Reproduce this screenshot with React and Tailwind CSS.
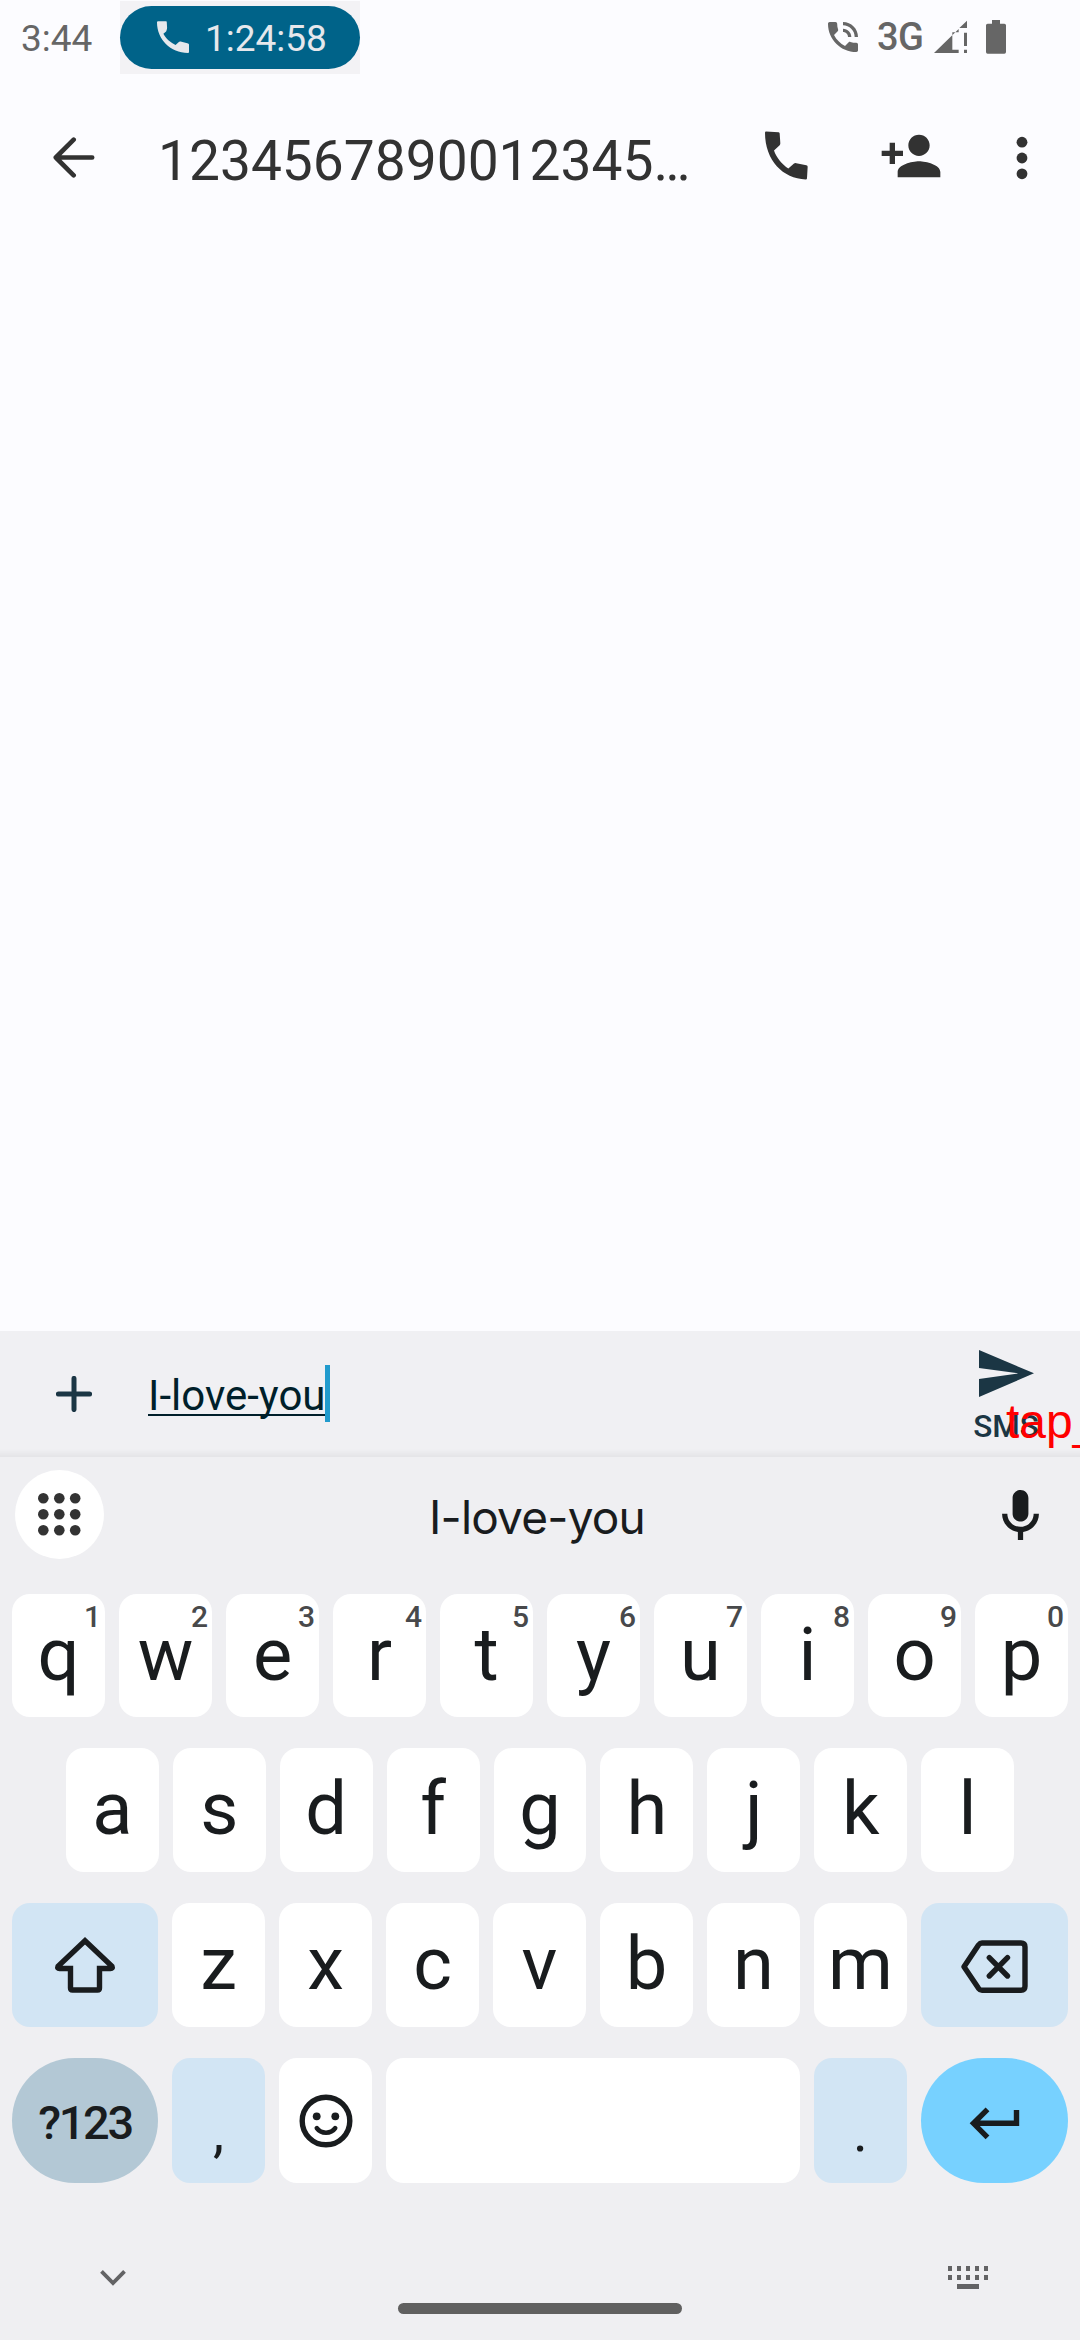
const ink = '#191c1e';

function Svg({ box, w, h, className = '', children }) {
  return (
    <svg viewBox={box} width={w} height={h} className={`block shrink-0 ${className}`} fill="none">
      {children}
    </svg>
  );
}

function StatusBar() {
  return (
    <div className="flex h-[74px] shrink-0 items-start text-[37px] leading-[44px]">
      <div className="w-[120px] pl-[21px] pt-[17px] text-[#666666]">3:44</div>
      <div className="mt-px flex h-[73px] w-[240px] items-center bg-[#f3f2f5]">
        <div className="flex h-[63px] w-full items-center rounded-full bg-[#006389] pl-[37px] text-[#e6e8ec]">
          <Svg box="472 63 95 95" w={32} h={32} className="-mt-px">
            <path fill="currentColor" d="M475 64H499Q501 64 501 66L502 84Q501 91 499 94L491 101C498 115 514 129 527 134L537 125Q539 123 542 124L562 129Q567 130 567 133V155Q567 158 564 158C512 158 472 118 472 67Q472 64 475 64Z" />
          </Svg>
          <span className="pl-[16px] pt-[3px]">1:24:58</span>
        </div>
      </div>
      <div className="ml-auto flex h-[74px] items-center pr-[74px] text-[#666666]">
        <Svg box="0 0 24 24" w={40} h={40}>
          <path fill="currentColor" d="M20 15.5c-1.25 0-2.45-.2-3.57-.57-.1-.03-.21-.05-.31-.05-.26 0-.51.1-.71.29l-2.2 2.2c-2.83-1.44-5.15-3.75-6.59-6.59l2.2-2.21c.28-.26.36-.65.25-1C8.7 6.45 8.5 5.25 8.5 4c0-.55-.45-1-1-1H4c-.55 0-1 .45-1 1 0 9.39 7.61 17 17 17 .55 0 1-.45 1-1v-3.5c0-.55-.45-1-1-1zM19 12h2c0-4.97-4.03-9-9-9v2c3.87 0 7 3.13 7 7zm-4 0h2c0-2.76-2.24-5-5-5v2c1.66 0 3 1.34 3 3z" />
        </Svg>
        <span className="ml-[14px] w-[56px] text-[38px] font-medium tracking-[-0.5px]">3G</span>
        <Svg box="642 60 99 102" w={33} h={34} className="ml-[1px]">
          <path fill="currentColor" d="M642 159L716 87V97H697V149H716V159ZM741 62V84H718ZM732 98H741V138H732ZM732 149H741V159H732Z" />
        </Svg>
        <Svg box="798 60 60 102" w={20} h={34} className="ml-[19px]">
          <path fill="currentColor" d="M816 60H840V71H853Q858 71 858 76V156Q858 161 853 161H803Q798 161 798 156V76Q798 71 803 71H816Z" />
        </Svg>
      </div>
    </div>
  );
}

function AppBar() {
  return (
    <header className="flex h-[167px] shrink-0 items-center text-[#323232]">
      <Svg box="160 410 126 124" w={42} h={41} className="ml-[53px]">
        <path d="M222 418L168 472L222 526M168 472H278" stroke="currentColor" strokeWidth="14" strokeLinecap="round" strokeLinejoin="round" />
      </Svg>
      <h1 className="ml-[63px] w-[560px] whitespace-nowrap pt-[7px] text-[55.1px] leading-[64px]">1234567890012345…</h1>
      <Svg box="136 392 129 146" w={43} h={49} className="ml-[47px] -mt-[5px]">
        <path fill="currentColor" d="M139 393L177 395Q180 396 180 399L182 428Q182 431 180 434L163 450C170 472 188 492 206 504L223 489Q226 487 230 488L260 494Q264 495 264 499L262 533Q262 537 258 537C190 535 136 480 136 397Q136 393 139 393Z" />
      </Svg>
      <Svg box="0 0 24 24" w={64} h={64} className="ml-[71px] -mt-[3px]">
        <path fill="currentColor" d="M15 12c2.21 0 4-1.79 4-4s-1.79-4-4-4-4 1.79-4 4 1.79 4 4 4zm-9-2V7H4v3H1v2h3v3h2v-3h3v-2H6zm9 4c-2.67 0-8 1.34-8 4v2h16v-2c0-2.66-5.33-4-8-4z" />
      </Svg>
      <Svg box="0 0 12 44" w={12} h={44} className="ml-[73px]">
        <g fill="currentColor">
          <circle cx="6" cy="6.2" r="5.4" />
          <circle cx="6" cy="22" r="5.4" />
          <circle cx="6" cy="37.8" r="5.4" />
        </g>
      </Svg>
    </header>
  );
}

function Composer() {
  return (
    <div className="relative flex h-[126px] shrink-0 items-center overflow-hidden bg-[#f0f0f3] text-[#1b3644]">
      <Svg box="0 0 36 36" w={36} h={36} className="ml-[56px]">
        <path d="M18 2.4V33.6M2.4 18H33.6" stroke="currentColor" strokeWidth="5" strokeLinecap="round" />
      </Svg>
      <div className="-mt-[2px] ml-[56px] flex items-center">
        <span className="border-b-[2px] border-[#001f2a] text-[42px] leading-[36px] text-[#001f2a] pt-[7px]">I-love-you</span>
        <span className="-ml-px h-[57px] w-[5px] bg-[#219bcd]" />
      </div>
      <div className="ml-auto mr-[40px] flex h-full w-[68px] flex-col items-center">
        <Svg box="237 120 165 141" w={55} h={47} className="mt-[19px]">
          <path fill="currentColor" d="M237 120L402 190L237 261V207L355 190L237 174Z" />
        </Svg>
        <span className="pt-[12px] text-[31.5px] font-medium leading-[36px]">SMS</span>
      </div>
      <span className="absolute left-[1006px] top-[64px] font-['Liberation_Sans',Arial,sans-serif] text-[48px] leading-[54px] text-[#ff0000]">tap_</span>
      <div className="absolute inset-x-0 bottom-0 h-[8px] bg-gradient-to-b from-transparent to-black/5" />
    </div>
  );
}

function SuggestionStrip() {
  return (
    <div className="flex h-[115px] shrink-0 items-center pl-[15px] pr-[42px]">
      <div className="flex size-[89px] items-center justify-center rounded-full bg-white">
        <Svg box="0 0 42.6 42.6" w={42.6} h={42.6}>
          <g fill="#333333">
            {[5.3, 21.3, 37.2].map((y) => [5.3, 21.3, 37.2].map((x) => <circle key={`${x}-${y}`} cx={x} cy={y} r="5.3" />))}
          </g>
        </Svg>
      </div>
      <span className="ml-[283px] w-[300px] pt-[4px] text-center font-[Inter,sans-serif] text-[46px] leading-[56px] tracking-[-0.8px] text-[#191c1e]">I-love-you</span>
      <Svg box="5 2 14 19" w={37} h={50} className="ml-auto -mr-px">
        <path fill={ink} d="M12 14c1.66 0 3-1.34 3-3V5c0-1.66-1.34-3-3-3S9 3.34 9 5v6c0 1.66 1.34 3 3 3zM17 11c0 2.76-2.24 5-5 5s-5-2.24-5-5H5c0 3.53 2.61 6.43 6 6.92V21h2v-3.08c3.39-.49 6-3.39 6-6.92h-2z" />
      </Svg>
    </div>
  );
}

function Key({ label, hint }) {
  return (
    <div className="relative flex flex-1 items-center justify-center rounded-[18px] bg-white pb-[2px] text-[74px] leading-[80px]">
      {label}
      {hint && <span className="absolute right-[4px] top-[5px] text-[30px] font-medium leading-[36px] text-[#48494b]">{hint}</span>}
    </div>
  );
}

function Keyboard() {
  const top = 'qwertyuiop'.split('');
  return (
    <div className="mt-[22px] flex shrink-0 flex-col gap-[31px] px-[12px] text-[#191c1e]">
      <div className="flex h-[123px] gap-[14px]">
        {top.map((k, i) => <Key key={k} label={k} hint={String((i + 1) % 10)} />)}
      </div>
      <div className="flex h-[124px] gap-[14px] px-[54px]">
        {'asdfghjkl'.split('').map((k) => <Key key={k} label={k} />)}
      </div>
      <div className="flex h-[124px] gap-[14px]">
        <div className="flex w-[146px] items-center justify-center rounded-[18px] bg-[#d2e5f4]">
          <Svg box="54 1935 62 60" w={62} h={60}>
            <path stroke={ink} strokeWidth="5.4" d="M85 1940.7L112 1966.3Q113 1968.5 110.5 1968.5H99.5V1988Q99.5 1990 97.5 1990H72.5Q70.5 1990 70.5 1988V1968.5H59.5Q57 1968.5 58 1966.3Z" />
          </Svg>
        </div>
        {'zxcvbnm'.split('').map((k) => <Key key={k} label={k} />)}
        <div className="flex w-[147px] items-center justify-center rounded-[18px] bg-[#d2e5f4]">
          <Svg box="959 1938 70 60" w={70} h={60} className="mt-[4px]">
            <path stroke={ink} strokeWidth="5.4" strokeLinejoin="round" d="M963 1967.7L977.5 1946Q979 1944 981 1944H1020Q1024 1944 1024 1948V1987.3Q1024 1991.3 1020 1991.3H981Q979 1991.3 977.5 1989.3Z" />
            <path stroke={ink} strokeWidth="5.4" strokeLinecap="round" d="M988.3 1958.7L1006.5 1977M1006.5 1958.7L988.3 1977" />
          </Svg>
        </div>
      </div>
      <div className="flex h-[125px] gap-[14px]">
        <div className="flex w-[146px] items-center justify-center rounded-full bg-[#b3c8d5] pt-[6px] text-[47px] font-medium tracking-[-2.4px]">?123</div>
        <div className="flex w-[93px] items-center justify-center rounded-[18px] bg-[#d2e5f4] pt-[22px] text-[56px] leading-[64px]">,</div>
        <div className="flex w-[93px] items-center justify-center rounded-[18px] bg-white">
          <Svg box="0 0 54 54" w={54} h={54}>
            <circle cx="27" cy="27" r="23.8" stroke={ink} strokeWidth="5.4" />
            <circle cx="17.7" cy="22.3" r="3.9" fill={ink} />
            <circle cx="36.3" cy="22.3" r="3.9" fill={ink} />
            <path d="M17.8 34.2Q21 38.7 27 38.7T36.2 34.2" stroke={ink} strokeWidth="4.6" strokeLinecap="round" />
          </Svg>
        </div>
        <div className="flex-1 rounded-[18px] bg-white" />
        <div className="flex w-[93px] items-center justify-center rounded-[18px] bg-[#d2e5f4] pt-[22px] text-[56px] leading-[64px]">.</div>
        <div className="flex w-[147px] items-center justify-center rounded-full bg-[#77d1ff]">
          <Svg box="968 2107 52 33" w={52} h={33} className="mt-[6px]">
            <path stroke={ink} strokeWidth="5.4" d="M986.5 2109.3L972.5 2123.3L986.5 2137.3M972.5 2123.3H1015.5V2110" />
          </Svg>
        </div>
      </div>
    </div>
  );
}

function NavBar() {
  return (
    <div className="mt-auto flex h-[90px] shrink-0 items-start justify-between pl-[99px] pr-[92px] text-[#636365]">
      <Svg box="99 2269 28 18" w={28} h={18} className="mt-[19px]">
        <path d="M101.5 2271.3L113 2283L124.5 2271.3" stroke="currentColor" strokeWidth="3.8" />
      </Svg>
      <div className="ml-[5px] mt-[53px] h-[11px] w-[284px] rounded-full bg-[#606060]" />
      <Svg box="0 0 40 23" w={40} h={23} className="mt-[16px]">
        <g fill="currentColor">
          {[0, 9, 18, 27, 36].map((x) => <path key={x} d={`M${x} 0h4v5h-4zM${x} 9h4v5h-4z`} />)}
          <path d="M9 18h22v5H9z" />
        </g>
      </Svg>
    </div>
  );
}

export default function App() {
  return (
    <div className="flex h-[2340px] w-[1080px] flex-col overflow-hidden bg-[#fcfcff] font-[Roboto,sans-serif]">
      <StatusBar />
      <AppBar />
      <main className="flex-1" />
      <Composer />
      <div className="flex h-[883px] shrink-0 flex-col bg-[#efeff2]">
        <SuggestionStrip />
        <Keyboard />
        <NavBar />
      </div>
    </div>
  );
}
